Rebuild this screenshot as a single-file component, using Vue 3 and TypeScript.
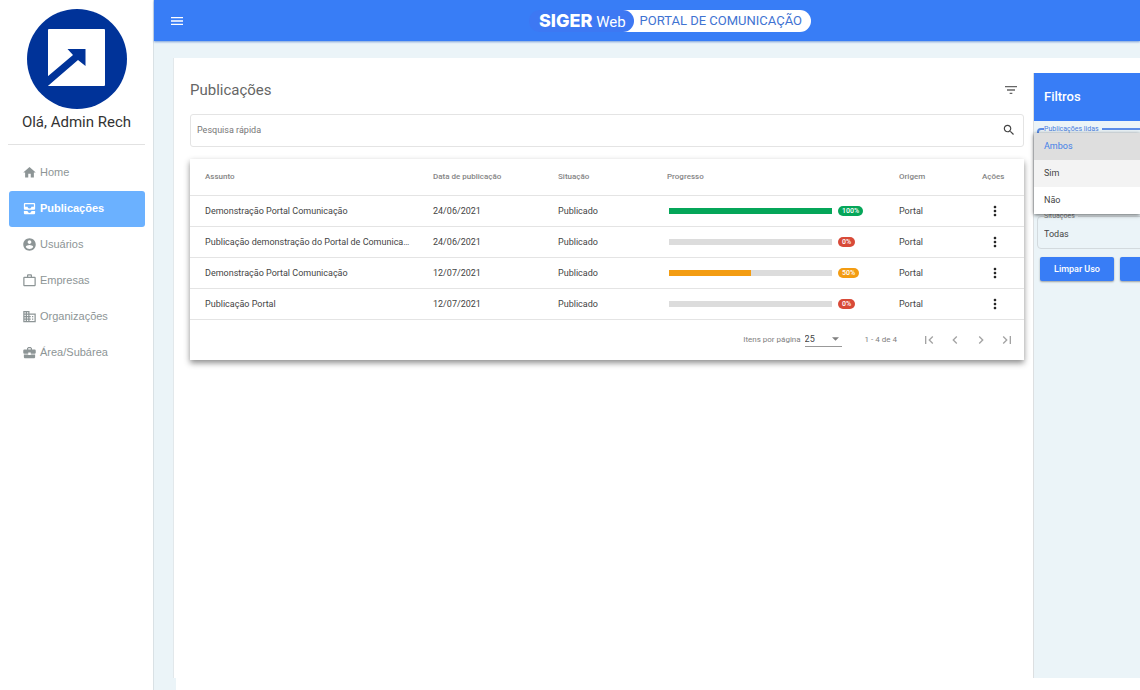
<script setup lang="ts">
import { ref } from 'vue'

interface NavItem { label: string; icon: string; active?: boolean }
interface Publication { subject: string; date: string; status: string; progress: number; origin: string }

const nav: NavItem[] = [
  { label: 'Home', icon: 'M10 20v-6h4v6h5v-8h3L12 3 2 12h3v8z' },
  {
    label: 'Publicações',
    active: true,
    icon: 'M19 3H5c-1.1 0-2 .9-2 2v7c0 1.1.9 2 2 2h14c1.1 0 2-.9 2-2V5c0-1.1-.9-2-2-2zm0 6h-4c0 1.62-1.38 3-3 3s-3-1.38-3-3H5V5h14v4zm-4 7h6v3c0 1.1-.9 2-2 2H5c-1.1 0-2-.9-2-2v-3h6c0 1.66 1.34 3 3 3s3-1.34 3-3z'
  },
  {
    label: 'Usuários',
    icon: 'M12 2C6.48 2 2 6.48 2 12s4.48 10 10 10 10-4.48 10-10S17.52 2 12 2zm0 3c1.66 0 3 1.34 3 3s-1.34 3-3 3-3-1.34-3-3 1.34-3 3-3zm0 14.2c-2.5 0-4.71-1.28-6-3.22.03-1.99 4-3.08 6-3.08 1.99 0 5.97 1.09 6 3.08-1.29 1.94-3.5 3.22-6 3.22z'
  },
  {
    label: 'Empresas',
    icon: 'M14 6V4h-4v2h4zM4 8v11h16V8H4zm16-2c1.11 0 2 .89 2 2v11c0 1.11-.89 2-2 2H4c-1.11 0-2-.89-2-2V8c0-1.11.89-2 2-2h4V4c0-1.11.89-2 2-2h4c1.11 0 2 .89 2 2v2h4z'
  },
  {
    label: 'Organizações',
    icon: 'M12 7V3H2v18h20V7H12zM6 19H4v-2h2v2zm0-4H4v-2h2v2zm0-4H4V9h2v2zm0-4H4V5h2v2zm4 12H8v-2h2v2zm0-4H8v-2h2v2zm0-4H8V9h2v2zm0-4H8V5h2v2zm10 12h-8v-2h2v-2h-2v-2h2v-2h-2V9h8v10zm-2-8h-2v2h2v-2zm0 4h-2v2h2v-2z'
  },
  {
    label: 'Área/Subárea',
    icon: 'M10 16v-1H3.01L3 19c0 1.11.89 2 2 2h14c1.11 0 2-.89 2-2v-4h-7v1h-4zm10-9h-4.01V5l-2-2h-4l-2 2v2H4c-1.1 0-2 .9-2 2v3c0 1.11.89 2 2 2h6v-2h4v2h6c1.1 0 2-.9 2-2V9c0-1.1-.9-2-2-2zm-6 0h-4V5h4v2z'
  }
]

const publications: Publication[] = [
  { subject: 'Demonstração Portal Comunicação', date: '24/06/2021', status: 'Publicado', progress: 100, origin: 'Portal' },
  { subject: 'Publicação demonstração do Portal de Comunicação', date: '24/06/2021', status: 'Publicado', progress: 0, origin: 'Portal' },
  { subject: 'Demonstração Portal Comunicação', date: '12/07/2021', status: 'Publicado', progress: 50, origin: 'Portal' },
  { subject: 'Publicação Portal', date: '12/07/2021', status: 'Publicado', progress: 0, origin: 'Portal' }
]

const pager = [
  { label: 'Primeira página', icon: 'M18.41 16.59L13.82 12l4.59-4.59L17 6l-6 6 6 6zM6 6h2v12H6z' },
  { label: 'Página anterior', icon: 'M15.41 7.41L14 6l-6 6 6 6 1.41-1.41L10.83 12z' },
  { label: 'Próxima página', icon: 'M10 6L8.59 7.41 13.17 12l-4.58 4.59L10 18l6-6z' },
  { label: 'Última página', icon: 'M5.59 7.41L10.18 12l-4.59 4.59L7 18l6-6-6-6zM16 6h2v12h-2z' }
]

const readOptions = ['Ambos', 'Sim', 'Não']
const readFilter = ref('Ambos')
const search = ref('')

function level(progress: number): string {
  return progress === 100 ? 'done' : progress > 0 ? 'partial' : 'none'
}
</script>

<template>
  <div class="shell">
    <aside class="sidebar">
      <svg class="avatar" viewBox="0 0 100 100" aria-hidden="true">
        <circle cx="50" cy="50" r="50" fill="#003399" />
        <rect x="21" y="20" width="57" height="57" rx="1" fill="#fff" />
        <path d="M20 68 46 46 40.500 40H58.500V57L51 51 22 76 20 77z" fill="#003399" />
      </svg>
      <p class="greeting">Olá, Admin Rech</p>
      <nav class="nav">
        <a v-for="item in nav" :key="item.label" href="#" class="nav-link" :class="{ active: item.active }">
          <svg viewBox="0 0 24 24" aria-hidden="true"><path :d="item.icon" /></svg>
          <span>{{ item.label }}</span>
        </a>
      </nav>
    </aside>

    <div class="main">
      <header class="topbar">
        <button class="icon-button menu" type="button" aria-label="Menu">
          <svg viewBox="0 0 24 24"><path d="M3 18h18v-2H3v2zm0-5h18v-2H3v2zm0-7v2h18V6H3z" /></svg>
        </button>
        <div class="brand">
          <span class="brand-product"><strong>SIGER</strong> Web</span>
          <span class="brand-portal">PORTAL DE COMUNICAÇÃO</span>
        </div>
      </header>

      <div class="workspace">
        <main class="content">
          <div class="heading">
            <h1>Publicações</h1>
            <button class="icon-button" type="button" aria-label="Filtrar">
              <svg viewBox="0 0 24 24"><path d="M10 18h4v-2h-4v2zM3 6v2h18V6H3zm3 7h12v-2H6v2z" /></svg>
            </button>
          </div>

          <div class="search">
            <input v-model="search" type="text" placeholder="Pesquisa rápida" aria-label="Pesquisa rápida" />
            <button class="icon-button" type="button" aria-label="Pesquisar">
              <svg viewBox="0 0 24 24"><path d="M15.5 14h-.79l-.28-.27C15.41 12.59 16 11.11 16 9.5 16 5.91 13.09 3 9.5 3S3 5.91 3 9.5 5.91 16 9.5 16c1.61 0 3.09-.59 4.23-1.57l.27.28v.79l5 4.99L20.49 19l-4.99-5zm-6 0C7.01 14 5 11.99 5 9.5S7.01 5 9.5 5 14 7.01 14 9.5 11.99 14 9.5 14z" /></svg>
            </button>
          </div>

          <section class="table-card">
            <table>
              <thead>
                <tr>
                  <th class="subject">Assunto</th>
                  <th class="date">Data de publicação</th>
                  <th class="status">Situação</th>
                  <th class="progress">Progresso</th>
                  <th class="origin">Origem</th>
                  <th class="actions">Ações</th>
                </tr>
              </thead>
              <tbody>
                <tr v-for="(row, i) in publications" :key="i">
                  <td class="subject">{{ row.subject }}</td>
                  <td>{{ row.date }}</td>
                  <td>{{ row.status }}</td>
                  <td>
                    <div class="meter" :class="level(row.progress)">
                      <div class="track"><div class="fill" :style="{ width: row.progress + '%' }"></div></div>
                      <span class="badge">{{ row.progress }}%</span>
                    </div>
                  </td>
                  <td>{{ row.origin }}</td>
                  <td>
                    <button class="icon-button more" type="button" aria-label="Ações da publicação">
                      <svg viewBox="0 0 24 24"><path d="M12 8c1.1 0 2-.9 2-2s-.9-2-2-2-2 .9-2 2 .9 2 2 2zm0 2c-1.1 0-2 .9-2 2s.9 2 2 2 2-.9 2-2-.9-2-2-2zm0 6c-1.1 0-2 .9-2 2s.9 2 2 2 2-.9 2-2-.9-2-2-2z" /></svg>
                    </button>
                  </td>
                </tr>
              </tbody>
            </table>
            <footer class="paginator">
              <label for="page-size">Itens por página</label>
              <div class="page-size">
                <select id="page-size">
                  <option>25</option>
                  <option>50</option>
                </select>
                <svg viewBox="0 0 10 5" aria-hidden="true"><path d="M0 0h10L5 5z" /></svg>
              </div>
              <span class="range">1 - 4 de 4</span>
              <div class="pages">
                <button v-for="p in pager" :key="p.label" class="icon-button" type="button" :aria-label="p.label">
                  <svg viewBox="0 0 24 24"><path :d="p.icon" /></svg>
                </button>
              </div>
            </footer>
          </section>
        </main>

        <aside class="drawer">
          <h2>Filtros</h2>
          <div class="filters">
            <fieldset class="field focused">
              <legend>Publicações lidas</legend>
              <ul class="options" role="listbox" aria-label="Publicações lidas">
                <li
                  v-for="(option, i) in readOptions"
                  :key="option"
                  role="option"
                  :aria-selected="option === readFilter"
                  :class="{ selected: option === readFilter, hovered: i === 1 }"
                  @click="readFilter = option"
                >{{ option }}</li>
              </ul>
            </fieldset>
            <fieldset class="field">
              <legend><label for="situation">Situações</label></legend>
              <select id="situation">
                <option>Todas</option>
                <option>Publicado</option>
              </select>
            </fieldset>
            <div class="buttons">
              <button type="button">Limpar Uso</button>
              <button type="button" aria-label="Filtrar"></button>
            </div>
          </div>
        </aside>
      </div>
      <div class="page-foot"></div>
    </div>
  </div>
</template>

<style>
body {
  margin: 0;
  background: #fff;
}
</style>

<style scoped>
* {
  box-sizing: border-box;
}

.shell {
  display: flex;
  min-height: 100vh;
  overflow: hidden;
  font-family: Roboto, "Liberation Sans", sans-serif;
  color: #444;
}

svg {
  display: block;
  fill: currentColor;
}

button,
input,
select {
  font: inherit;
  color: inherit;
  border: 0;
  padding: 0;
  background: none;
}

.icon-button svg {
  width: 16px;
  height: 16px;
}

.sidebar {
  flex: 0 0 154px;
  padding: 9px 8px 0;
  border-right: 1px solid #d9e1e5;
}

.avatar {
  width: 100px;
  height: 100px;
  margin: 0 auto;
}

.greeting {
  margin: 0;
  padding: 3px 0 12px;
  border-bottom: 1px solid #e2e2e2;
  font-size: 15px;
  line-height: 20px;
  text-align: center;
  color: #333;
}

.nav {
  padding: 10px 0 0 1px;
}

.nav-link {
  display: flex;
  align-items: center;
  gap: 3px;
  height: 36px;
  padding: 0 0 2px 13px;
  border-radius: 3px;
  font: 11px "Liberation Sans", Arial, sans-serif;
  color: #8d9596;
  text-decoration: none;
}

.nav-link svg {
  width: 15px;
  height: 15px;
}

.nav-link.active {
  background: #6bb1ff;
  color: #fff;
  font-weight: bold;
}

.main {
  flex: 1;
  min-width: 0;
  display: flex;
  flex-direction: column;
  background: #ebf4f8;
}

.topbar {
  display: flex;
  align-items: center;
  height: 41px;
  padding: 0 15px;
  background: #387df6;
  box-shadow: 0 1px 2px #7ba0d8;
  color: #fff;
}

.menu {
  flex: 0 0 16px;
}

.brand {
  display: flex;
  height: 22px;
  margin: 0 auto;
  padding-left: 30px;
  line-height: 22px;
}

.brand-product {
  z-index: 1;
  padding: 0 8px 0 10px;
  border-radius: 11px;
  background: #3d78f3;
  font-size: 15px;
}

.brand-product strong {
  font-family: Inter, sans-serif;
  font-size: 18px;
  font-weight: 800;
}

.brand-portal {
  margin-left: -11px;
  padding: 0 9px 0 17px;
  border-radius: 0 11px 11px 0;
  background: #fff;
  color: #3f73d2;
  font-size: 13px;
}

.workspace {
  flex: 1;
  display: flex;
  margin: 17px 0 0 19px;
  padding-top: 15px;
  border-left: 1px solid #e2e8eb;
  background: #fff;
}

.content {
  flex: 1;
  min-width: 0;
  padding: 0 9px 0 16px;
}

.heading {
  display: flex;
  align-items: center;
  justify-content: space-between;
  height: 34px;
  padding-right: 5px;
  color: #666;
}

h1 {
  margin: 0;
  font-size: 15px;
  font-weight: 400;
}

.search {
  display: flex;
  align-items: center;
  height: 33px;
  margin-top: 7px;
  padding: 0 7px 1px 6px;
  border: 1px solid #e4e4e4;
  border-radius: 3px;
}

.search input {
  flex: 1;
  min-width: 0;
  font-size: 9px;
  outline: 0;
}

.search input::placeholder {
  color: #777;
  opacity: 1;
}

.search svg {
  width: 14px;
  height: 14px;
}

.table-card {
  margin-top: 12px;
  background: #fff;
  box-shadow: 0 3px 6px rgba(0, 0, 0, 0.45);
}

table {
  width: 100%;
  table-layout: fixed;
  border-collapse: collapse;
}

th,
td {
  padding: 0;
  border-bottom: 1px solid #e4e4e4;
  text-align: left;
  white-space: nowrap;
}

th {
  height: 36px;
  font-size: 8px;
  font-weight: 500;
  color: #858585;
}

td {
  height: 31px;
  font-size: 9px;
}

th.subject,
td.subject {
  padding: 0 22px 0 15px;
  overflow: hidden;
  text-overflow: ellipsis;
}

th.date {
  width: 125px;
}

th.status {
  width: 109px;
}

th.progress {
  width: 232px;
}

th.origin {
  width: 83px;
}

th.actions {
  width: 42px;
}

.meter {
  display: flex;
  align-items: center;
  gap: 6px;
  padding-left: 2px;
}

.track {
  width: 163px;
  height: 6px;
  background: #dcdcdc;
}

.fill {
  height: 100%;
}

.badge {
  padding: 0 4px;
  border-radius: 5px;
  font-size: 7px;
  font-weight: 500;
  line-height: 10px;
  color: #fff;
}

.done .fill,
.done .badge {
  background: #05a659;
}

.partial .fill,
.partial .badge {
  background: #f39c12;
}

.none .badge {
  background: #d84a38;
}

.more {
  display: block;
  margin-left: 5px;
  color: #222;
}

.paginator {
  display: flex;
  align-items: center;
  justify-content: flex-end;
  height: 40px;
  padding-right: 9px;
  font-size: 8px;
  color: #808080;
}

.page-size {
  display: flex;
  align-items: center;
  width: 37px;
  height: 15px;
  margin-left: 4px;
  border-bottom: 1px solid #999;
}

.page-size select {
  flex: 1;
  appearance: none;
  font-size: 9px;
  color: #444;
}

.page-size svg {
  width: 7px;
  height: 4px;
  margin-right: 3px;
}

.range {
  margin-left: 23px;
}

.pages {
  display: flex;
  gap: 10px;
  margin-left: 24px;
  color: #a3a3a3;
}

.drawer {
  flex: 0 0 107px;
  overflow: hidden;
  border-left: 1px solid #dcdfe1;
  background: #ebf4f8;
}

h2 {
  margin: 0;
  padding-left: 10px;
  background: #387df6;
  font-size: 13px;
  font-weight: 500;
  line-height: 48px;
  color: #fff;
}

.filters {
  width: 230px;
  padding: 4px 4px 0 3px;
}

.field {
  min-width: 0;
  height: 37px;
  margin: 0;
  padding: 0 6px;
  border: 1px solid #d3dade;
  border-radius: 4px;
}

.field legend {
  padding: 0 3px 0 0;
  font-size: 7px;
  line-height: 8px;
  color: #777;
}

.field select {
  width: 100%;
  height: 27px;
  appearance: none;
  font-size: 9px;
}

.focused {
  height: 87px;
  border: 2px solid #5b8de8;
  padding-left: 5px;
}

.focused legend {
  color: #4c80dd;
}

.options {
  position: absolute;
  right: 0;
  width: 106px;
  margin: 0;
  padding: 0;
  list-style: none;
  background: #fff;
  box-shadow: 0 1px 4px rgba(0, 0, 0, 0.6);
  font-size: 9px;
  line-height: 27px;
}

.options li {
  padding-left: 10px;
  cursor: pointer;
}

.options .selected {
  background: #dedede;
  color: #4380e8;
}

.options .hovered {
  background: #f3f3f3;
}

.buttons {
  display: flex;
  gap: 6px;
  padding: 8px 0 0 3px;
}

.buttons button {
  width: 74px;
  height: 24px;
  border-radius: 2px;
  background: #387df6;
  box-shadow: 0 1px 2px rgba(0, 0, 0, 0.35);
  font-size: 9px;
  font-weight: 500;
  color: #fff;
}

.page-foot {
  height: 12px;
  margin-left: 22px;
  background: #fff;
}
</style>
